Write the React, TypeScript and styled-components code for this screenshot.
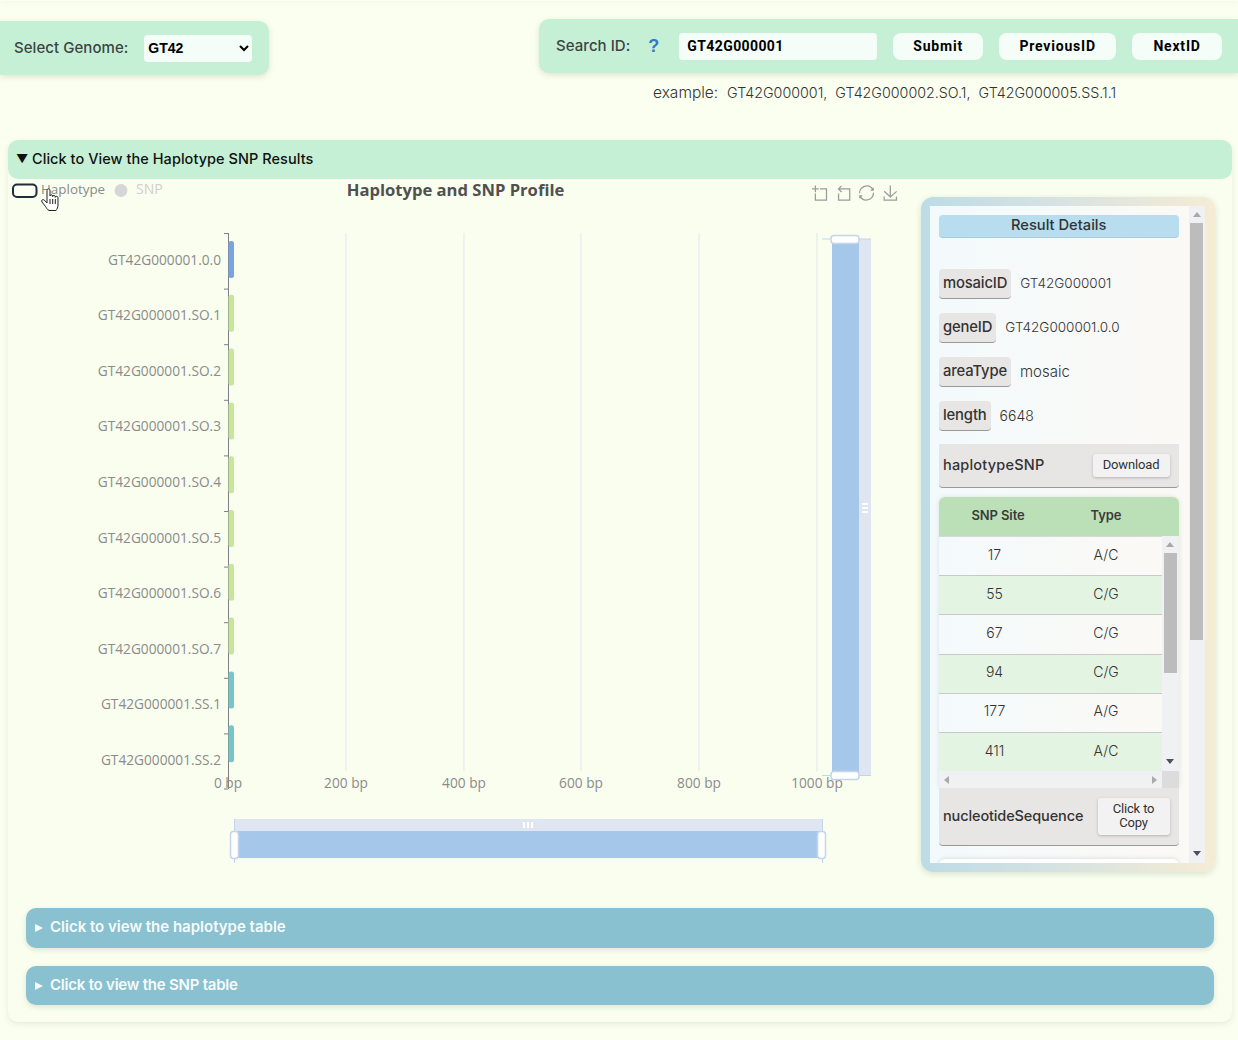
import React from 'react';
import styled, { createGlobalStyle } from 'styled-components';

const GENES = [
  { id: 'GT42G000001.0.0', color: '#78a5dc' },
  { id: 'GT42G000001.SO.1', color: '#c6e69b' },
  { id: 'GT42G000001.SO.2', color: '#c6e69b' },
  { id: 'GT42G000001.SO.3', color: '#c6e69b' },
  { id: 'GT42G000001.SO.4', color: '#c6e69b' },
  { id: 'GT42G000001.SO.5', color: '#c6e69b' },
  { id: 'GT42G000001.SO.6', color: '#c6e69b' },
  { id: 'GT42G000001.SO.7', color: '#c6e69b' },
  { id: 'GT42G000001.SS.1', color: '#77c5c6' },
  { id: 'GT42G000001.SS.2', color: '#77c5c6' },
];
const TICKS = [
  { x: 228, label: '0 bp' },
  { x: 346, label: '200 bp' },
  { x: 464, label: '400 bp' },
  { x: 581, label: '600 bp' },
  { x: 699, label: '800 bp' },
  { x: 817, label: '1000 bp' },
];
const SNPS = [
  ['17', 'A/C'],
  ['55', 'C/G'],
  ['67', 'C/G'],
  ['94', 'C/G'],
  ['177', 'A/G'],
  ['411', 'A/C'],
];
const FIELDS = [
  { name: 'mosaicID', value: 'GT42G000001', size: 13.5 },
  { name: 'geneID', value: 'GT42G000001.0.0', size: 13.5 },
  { name: 'areaType', value: 'mosaic', size: 15 },
  { name: 'length', value: '6648', size: 14 },
];
const TOOL_ICONS = [
  { x: 812, d: 'M0,13.5h26.9 M13.5,26.9V0 M32.1,13.5H58V58H13.5V32.1' },
  { x: 836, d: 'M22,1.4L9.9,13.5l12.3,12.3 M10.3,13.5H54.9v44.6H10.3v-26' },
  {
    x: 859,
    d: 'M47,18.9h9.8V8.7 M56.3,20.1C52.1,9,40.5,0.6,26.8,2.1C12.6,3.7,1.6,16.2,2.1,30.6 M13,41.1H3.1v10.2 M3.7,39.9c4.2,11.1,15.8,19.5,29.5,18c14.2-1.6,25.2-14.1,24.7-28.5',
  },
  { x: 883, d: 'M4.7,22.9L29.3,45.5L54.7,23.4M4.6,43.6L4.6,58L53.8,58L53.8,43.6M29.2,45.1L29.2,0' },
];
const labelY = (i: number) => 259.5 + i * 55.6;
const barY = (i: number) => 241 + i * 53.8;

const Chart: React.FC = () => (
  <ChartSvg viewBox="8 179 900 701" width={900} height={701}>
    <LegendBox x={13} y={184.5} width={23.5} height={12.5} rx={4} />
    <LegendText x={41} y={193.5}>Haplotype</LegendText>
    <circle cx={121} cy={190.5} r={6.5} fill="#d6d6d6" />
    <LegendText x={136} y={193.5} $off>SNP</LegendText>
    <ChartTitle x={455.5} y={196}>Haplotype and SNP Profile</ChartTitle>
    {TOOL_ICONS.map(icon => (
      <ToolIcon key={icon.x} d={icon.d} transform={`translate(${icon.x} 185.5) scale(0.25)`} />
    ))}

    {TICKS.slice(1).map(t => (
      <line key={t.x} x1={t.x} x2={t.x} y1={233} y2={771} stroke="#e2e7f1" />
    ))}
    <line x1={228.5} x2={228.5} y1={233} y2={789} stroke="#7d7f87" />
    {GENES.map((g, i) => (
      <g key={g.id}>
        <line x1={224} x2={228} y1={233.5 + i * 55.6} y2={233.5 + i * 55.6} stroke="#7d7f87" />
        <rect x={228.500} y={barY(i)} width={5.500} height={37} rx={2.500} fill={g.color} />
        <AxisLabel x={221} y={labelY(i) + 5} textAnchor="end">{g.id}</AxisLabel>
      </g>
    ))}
    <line x1={224} x2={228} y1={789} y2={789} stroke="#7d7f87" />
    {TICKS.map(t => (
      <AxisLabel key={t.x} x={t.x} y={788} textAnchor="middle">{t.label}</AxisLabel>
    ))}

    <rect x={859} y={239} width={12} height={537} fill="#dfe5f1" />
    <rect x={832} y={239} width={27} height={537} fill="#a5c7e9" />
    <line x1={822} x2={871} y1={239} y2={239} stroke="#c3d5ea" />
    <line x1={822} x2={871} y1={775.500} y2={775.500} stroke="#c3d5ea" />
    <ZoomHandle x={831} y={235.500} width={28} height={8} rx={3} />
    <ZoomHandle x={831} y={771.500} width={28} height={8} rx={3} />
    <rect x={862} y={503} width={6} height={2} fill="#fff" />
    <rect x={862} y={507} width={6} height={2} fill="#fff" />
    <rect x={862} y={511} width={6} height={2} fill="#fff" />

    <rect x={234} y={819} width={588} height={12} fill="#dfe5f1" />
    <rect x={234} y={831} width={588} height={27} fill="#a5c7e9" />
    <line x1={234.500} x2={234.500} y1={819} y2={863} stroke="#c3d5ea" />
    <line x1={822.500} x2={822.500} y1={819} y2={863} stroke="#c3d5ea" />
    <ZoomHandle x={230.500} y={831.500} width={8} height={27} rx={3} />
    <ZoomHandle x={817.500} y={831.500} width={8} height={27} rx={3} />
    <rect x={523} y={822} width={2} height={6} fill="#fff" />
    <rect x={527} y={822} width={2} height={6} fill="#fff" />
    <rect x={531} y={822} width={2} height={6} fill="#fff" />

    <HandCursor d="M47 190.500c0-2.200 3-2.200 3 0V196c0-1.600 2.600-1.600 2.600 0v.6c0-1.600 2.600-1.600 2.600 0v.8c0-1.500 2.800-1.500 2.800.3V205c0 2.500-1 4-2 5.500H49c-1.500-.8-2.500-2.500-3.500-4L42 202c-1.200-1.800 1-3.200 2.300-1.900L47 203Z M50 199v5 M52.700 199v5 M55.300 199v5" />
  </ChartSvg>
);

const Scrollbar: React.FC<{ $thumbHeight: number }> = ({ $thumbHeight }) => (
  <Rail>
    <ArrowUp />
    <Thumb $height={$thumbHeight} />
    <ArrowDown />
  </Rail>
);

const App: React.FC = () => (
  <Page>
    <GlobalStyle />
    <TopBar />
    <TopRow>
      <GenomeCard>
        <FieldLabel>Select Genome:</FieldLabel>
        <GenomeSelect defaultValue="GT42">
          <option>GT42</option>
        </GenomeSelect>
      </GenomeCard>
      <SearchColumn>
        <SearchCard>
          <FieldLabel>Search ID:</FieldLabel>
          <Help>?</Help>
          <SearchInput defaultValue="GT42G000001" />
          <ActionButton $width={90}>Submit</ActionButton>
          <ActionButton $width={117}>PreviousID</ActionButton>
          <ActionButton $width={90}>NextID</ActionButton>
        </SearchCard>
        <Example>
          <ExampleWord>example:</ExampleWord>GT42G000001,&nbsp; GT42G000002.SO.1,&nbsp; GT42G000005.SS.1.1
        </Example>
      </SearchColumn>
    </TopRow>

    <Section>
      <SectionHeader>
        <Caret>▼</Caret>Click to View the Haplotype SNP Results
      </SectionHeader>
      <ChartRow>
        <Chart />
        <DetailFrame>
          <DetailInner>
            <DetailContent>
              <DetailTitle>Result Details</DetailTitle>
              <FieldList>
                {FIELDS.map(f => (
                  <FieldRow key={f.name}>
                    <FieldTag>{f.name}</FieldTag>
                    <FieldValue $size={f.size}>{f.value}</FieldValue>
                  </FieldRow>
                ))}
              </FieldList>
              <BlockRow $height={44}>
                <BlockName $spacing={0.2}>haplotypeSNP</BlockName>
                <SmallButton $width={77} $height={23}>Download</SmallButton>
              </BlockRow>
              <SnpTable>
                <SnpHead>
                  <SnpHeadCell>SNP Site</SnpHeadCell>
                  <SnpHeadCell>Type</SnpHeadCell>
                </SnpHead>
                <SnpScroll>
                  <SnpRows>
                    {SNPS.map(([site, type], i) => (
                      <SnpRow key={site} $odd={i % 2 === 1}>
                        <SnpCell>{site}</SnpCell>
                        <SnpCell>{type}</SnpCell>
                      </SnpRow>
                    ))}
                  </SnpRows>
                  <Scrollbar $thumbHeight={120} />
                </SnpScroll>
                <HorizontalBar>
                  <ArrowLeft />
                  <ArrowRight />
                  <Corner />
                </HorizontalBar>
              </SnpTable>
              <BlockRow $height={58}>
                <BlockName $spacing={-0.12}>nucleotideSequence</BlockName>
                <SmallButton $width={72} $height={37}>Click to<br />Copy</SmallButton>
              </BlockRow>
              <NextCard />
            </DetailContent>
            <Scrollbar $thumbHeight={417} />
          </DetailInner>
        </DetailFrame>
      </ChartRow>
      <AccordionList>
        <Accordion $height={40} $spacing={0}><SmallCaret />Click to view the haplotype table</Accordion>
        <Accordion $height={39} $spacing={-0.22}><SmallCaret />Click to view the SNP table</Accordion>
      </AccordionList>
    </Section>
  </Page>
);

export default App;

const GlobalStyle = createGlobalStyle`
  html, body {
    margin: 0;
    padding: 0;
    background: #fbfff0;
  }
  * {
    box-sizing: border-box;
  }
  body {
    font-family: Inter, "Noto Sans", sans-serif;
    color: #333;
    overflow: hidden;
  }
`;

const Page = styled.div`
  width: 1238px;
  height: 1040px;
  overflow: hidden;
`;

const TopBar = styled.div`
  height: 1px;
  box-shadow: 0 0 6px rgba(90, 110, 70, 0.25);
`;

const TopRow = styled.div`
  display: flex;
  justify-content: space-between;
  align-items: flex-start;
  padding-top: 18px;
  height: 139px;
`;

const GenomeCard = styled.div`
  display: flex;
  align-items: center;
  gap: 16px;
  width: 269px;
  height: 54px;
  margin-top: 2px;
  padding: 0 17px 0 14px;
  background: #c6f0d6;
  border-radius: 0 10px 10px 0;
  box-shadow: 0 2px 6px rgba(60, 90, 60, 0.16);
`;

const FieldLabel = styled.span`
  padding-bottom: 2px;
  font-size: 15px;
  font-weight: 500;
  letter-spacing: 0.05px;
  color: #3c4442;
  white-space: nowrap;
`;

const GenomeSelect = styled.select`
  width: 108px;
  height: 27px;
  padding: 0;
  border: none;
  border-radius: 4px;
  background: #f4fdf7;
  font-family: "Liberation Sans", sans-serif;
  font-size: 14px;
  font-weight: 700;
  color: #000;
`;

const SearchColumn = styled.div`
  width: 699px;
`;

const SearchCard = styled.div`
  display: flex;
  align-items: center;
  height: 54px;
  padding: 0 16px 0 17px;
  background: #c6f0d6;
  border-radius: 10px 0 0 10px;
  box-shadow: 0 2px 6px rgba(60, 90, 60, 0.16);
`;

const Help = styled.span`
  width: 49px;
  padding-left: 18px;
  font-family: "Liberation Sans", sans-serif;
  font-size: 18px;
  font-weight: 700;
  color: #3478c6;
`;

const SearchInput = styled.input`
  width: 198px;
  height: 27px;
  margin-right: 16px;
  padding: 0 8px;
  border: none;
  border-radius: 4px;
  background: #f4fdf7;
  font-family: Roboto, sans-serif;
  font-size: 14px;
  font-weight: 700;
  letter-spacing: 0.4px;
  color: #000;
`;

const ActionButton = styled.button<{ $width: number }>`
  width: ${p => p.$width}px;
  height: 27px;
  margin-right: 16px;
  border: none;
  border-radius: 8px;
  background: #f4fdf7;
  font-family: Roboto, sans-serif;
  font-size: 14px;
  font-weight: 700;
  letter-spacing: 0.8px;
  color: #000;
  &:last-child {
    margin-right: 0;
  }
`;

const Example = styled.div`
  margin-top: 10px;
  padding-left: 114px;
  font-size: 14.280px;
  font-weight: 300;
  color: #333;
  white-space: nowrap;
`;

const ExampleWord = styled.span`
  display: inline-block;
  width: 74px;
  font-size: 15.500px;
`;

const Section = styled.section`
  width: 1224px;
  height: 882px;
  margin-left: 8px;
  background: #f9feee;
  border-radius: 10px;
  box-shadow: 0 2px 6px rgba(90, 110, 70, 0.14);
`;

const SectionHeader = styled.div`
  display: flex;
  align-items: center;
  height: 39px;
  padding: 0 0 2px 8px;
  background: #c6f0d6;
  border-radius: 10px;
  font-size: 14.500px;
  font-weight: 500;
  letter-spacing: 0.05px;
  color: #111;
`;

const Caret = styled.span`
  width: 16px;
  font-size: 12px;
`;

const ChartRow = styled.div`
  display: flex;
  align-items: flex-start;
`;

const ChartSvg = styled.svg`
  display: block;
  flex: none;
`;

const LegendBox = styled.rect`
  fill: #fbfff4;
  stroke: #1f2d3d;
  stroke-width: 2;
`;

const LegendText = styled.text<{ $off?: boolean }>`
  font-family: "Open Sans", sans-serif;
  font-size: ${p => (p.$off ? 14 : 13.4)}px;
  fill: ${p => (p.$off ? '#cfcfcf' : '#8a8a8a')};
`;

const ChartTitle = styled.text`
  font-family: "Open Sans", sans-serif;
  font-size: 16.600px;
  font-weight: 700;
  fill: #505050;
  text-anchor: middle;
`;

const ToolIcon = styled.path`
  fill: none;
  stroke: #9b9b9b;
  stroke-width: 5;
`;

const AxisLabel = styled.text`
  font-family: "Open Sans", sans-serif;
  font-size: 13.700px;
  fill: #8b8b8d;
`;

const ZoomHandle = styled.rect`
  fill: #fff;
  stroke: #c3d5ea;
  stroke-width: 1.500;
`;

const HandCursor = styled.path`
  fill: #fff;
  stroke: #222;
  stroke-width: 1;
  stroke-linejoin: round;
`;

const DetailFrame = styled.div`
  flex: none;
  width: 294px;
  height: 675px;
  margin: 18px 0 0 13px;
  padding: 9px 10px 9px 9px;
  background: linear-gradient(90deg, #bcdce6 0%, #d6e2e2 45%, #f5ecd4 100%);
  border-radius: 12px;
  box-shadow: 0 2px 6px rgba(80, 100, 80, 0.18);
`;

const DetailInner = styled.div`
  display: flex;
  height: 100%;
  overflow: hidden;
  background: #f0f1f2;
`;

const DetailContent = styled.div`
  width: 259px;
  padding: 9px 10px 0 9px;
  overflow: hidden;
  background: linear-gradient(90deg, #f3fafc 0%, #fbf9f5 100%);
`;

const DetailTitle = styled.div`
  height: 23px;
  line-height: 21px;
  background: #b8ddee;
  border-radius: 4px;
  border-bottom: 1px solid #a9cbdc;
  font-size: 14.700px;
  font-weight: 500;
  text-align: center;
  color: #333;
`;

const FieldList = styled.div`
  display: flex;
  flex-direction: column;
  gap: 14px;
  margin: 31px 0 13px;
`;

const FieldRow = styled.div`
  display: flex;
  align-items: center;
  gap: 9px;
  height: 30px;
`;

const FieldTag = styled.span`
  display: flex;
  align-items: center;
  height: 30px;
  padding: 0 4px 2px;
  background: #e8e6e5;
  border-radius: 4px;
  border-bottom: 1px solid #999;
  font-size: 14.800px;
  font-weight: 500;
  letter-spacing: -0.15px;
  color: #333;
`;

const FieldValue = styled.span<{ $size: number }>`
  padding-bottom: 2px;
  font-size: ${p => p.$size}px;
  font-weight: 300;
  color: #333;
`;

const BlockRow = styled.div<{ $height: number }>`
  display: flex;
  align-items: center;
  justify-content: space-between;
  height: ${p => p.$height}px;
  padding: 0 9px 0 4px;
  background: #e8e6e5;
  border-radius: 0 0 4px 4px;
  border-bottom: 1px solid #999;
`;

const BlockName = styled.span<{ $spacing: number }>`
  padding-bottom: 2px;
  font-size: 14.500px;
  font-weight: 500;
  letter-spacing: ${p => p.$spacing}px;
  color: #333;
`;

const SmallButton = styled.button<{ $width: number; $height: number }>`
  flex: none;
  width: ${p => p.$width}px;
  height: ${p => p.$height}px;
  padding: 0 0 1px;
  border: none;
  border-radius: 3px;
  background: #f2f2f3;
  box-shadow: 0 1px 3px rgba(0, 0, 0, 0.22);
  font-family: Roboto, sans-serif;
  font-size: 13px;
  letter-spacing: -0.15px;
  line-height: 14px;
  color: #333;
`;

const SnpTable = styled.div`
  margin-top: 9px;
  box-shadow: 0 0 5px rgba(0, 0, 0, 0.1);
  border-radius: 6px 6px 0 0;
`;

const SnpHead = styled.div`
  display: grid;
  grid-template-columns: 118px 98px;
  height: 39px;
  padding-bottom: 3px;
  align-items: center;
  background: #bbe0b8;
  border-radius: 6px 6px 0 0;
`;

const SnpHeadCell = styled.span`
  font-size: 13px;
  font-weight: 600;
  letter-spacing: -0.1px;
  text-align: center;
  color: #3b3b3b;
`;

const SnpScroll = styled.div`
  display: flex;
  height: 235px;
  background: #f0f1f2;
`;

const SnpRows = styled.div`
  width: 223px;
`;

const SnpRow = styled.div<{ $odd: boolean }>`
  display: grid;
  grid-template-columns: 111px 112px;
  align-items: center;
  height: 39.200px;
  padding-bottom: 4px;
  background: ${p => (p.$odd ? '#e4f4e3' : 'linear-gradient(90deg, #f4fafc, #fbf9f5)')};
  border-top: 1px solid #c8c8c8;
  &:first-child {
    border-top-color: #d8d8d8;
  }
`;

const SnpCell = styled.span`
  font-size: 14px;
  font-weight: 300;
  text-align: center;
  color: #333;
`;

const Rail = styled.div`
  flex: none;
  display: flex;
  flex-direction: column;
  align-items: center;
  width: 16.500px;
  background: #f0f1f2;
`;

const ArrowUp = styled.div`
  flex: none;
  width: 0;
  height: 0;
  margin: 6px 0 6px;
  border-left: 4px solid transparent;
  border-right: 4px solid transparent;
  border-bottom: 5px solid #a9a9a9;
`;

const ArrowDown = styled.div`
  flex: none;
  width: 0;
  height: 0;
  margin-bottom: 7px;
  border-left: 4px solid transparent;
  border-right: 4px solid transparent;
  border-top: 5px solid #50505a;
`;

const Thumb = styled.div<{ $height: number }>`
  flex: none;
  width: 13px;
  height: ${p => p.$height}px;
  margin-bottom: auto;
  background: #bcbcbc;
`;

const HorizontalBar = styled.div`
  display: flex;
  align-items: center;
  height: 17px;
  padding-left: 5px;
  background: #f0f1f2;
`;

const ArrowLeft = styled.div`
  width: 0;
  height: 0;
  border: 4px solid transparent;
  border-left-width: 0;
  border-right: 5px solid #a9a9a9;
`;

const ArrowRight = styled.div`
  width: 0;
  height: 0;
  margin-left: auto;
  margin-right: 5px;
  border: 4px solid transparent;
  border-right-width: 0;
  border-left: 5px solid #a9a9a9;
`;

const Corner = styled.div`
  width: 17px;
  height: 17px;
  background: #dcdcdc;
`;

const NextCard = styled.div`
  height: 20px;
  margin-top: 13px;
  background: #fff;
  border-radius: 6px 6px 0 0;
  box-shadow: 0 0 5px rgba(0, 0, 0, 0.14);
`;

const AccordionList = styled.div`
  display: flex;
  flex-direction: column;
  gap: 18px;
  margin: 28px 18px 0;
`;

const Accordion = styled.div<{ $height: number; $spacing: number }>`
  display: flex;
  align-items: center;
  height: ${p => p.$height}px;
  padding: 0 0 3px 9px;
  background: #8ac1d0;
  border-radius: 10px;
  box-shadow: 0 2px 5px rgba(60, 90, 90, 0.15);
  font-size: 15px;
  font-weight: 600;
  letter-spacing: ${p => p.$spacing}px;
  color: #f6fbfb;
`;

const SmallCaret = styled.span`
  width: 0;
  height: 0;
  margin: 3px 7px 0 0;
  border: 4.500px solid transparent;
  border-right-width: 0;
  border-left: 8px solid #f6fbfb;
`;
